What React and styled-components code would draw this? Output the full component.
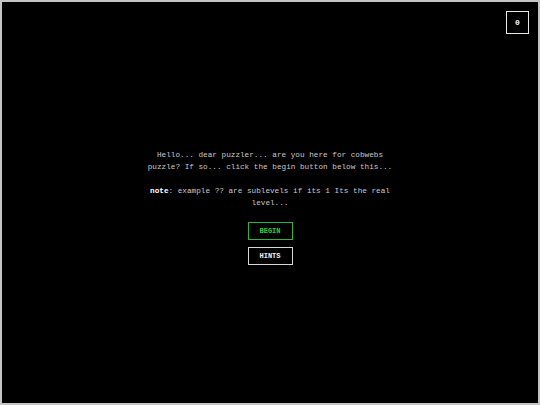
import React from "react";
import styled, { createGlobalStyle } from "styled-components";

const Global = createGlobalStyle`
  html, body { margin: 0; padding: 0; background: #c4c4c4; }
  body { font-family: "Liberation Mono", "Courier New", monospace; }
`;

const Frame = styled.div`
  position: relative;
  margin: 2px;
  height: calc(100vh - 4px);
  background: #000;
  display: flex;
  flex-direction: column;
  align-items: center;
  justify-content: center;
`;

const Counter = styled.div`
  position: absolute;
  top: 9px;
  right: 9px;
  width: 21px;
  height: 21px;
  border: 1.5px solid #e8e8e8;
  color: #fff;
  font-size: 8px;
  font-weight: bold;
  display: flex;
  align-items: center;
  justify-content: center;
`;

const Content = styled.div`
  width: 252px;
  display: flex;
  flex-direction: column;
  align-items: center;
  margin-top: 15px;
`;

const Para = styled.p`
  margin: 0 0 ${(p) => p.$gap}px;
  color: #c8c8c8;
  font-size: 7.7px;
  line-height: 12px;
  text-align: center;
`;

const Strong = styled.b`
  color: #fff;
`;

const Button = styled.button`
  width: 45px;
  height: 18px;
  padding: 0;
  background: #000;
  border: 1px solid ${(p) => p.$border};
  color: ${(p) => p.$color};
  font-family: "Liberation Mono", "Courier New", monospace;
  font-weight: bold;
  font-size: 7px;
  margin-bottom: 7px;
  cursor: pointer;
`;

export default function App() {
  return (
    <>
      <Global />
      <Frame>
        <Counter>0</Counter>
        <Content>
          <Para $gap={12}>
            Hello... dear puzzler... are you here for cobwebs puzzle? If so... click the begin button below this...
          </Para>
          <Para $gap={13}>
            <Strong>note</Strong>: example ?? are sublevels if its 1 Its the real level...
          </Para>
          <Button $border="#2fb52f" $color="#2fd02f">BEGIN</Button>
          <Button $border="#d8d8d8" $color="#f0f0f0">HINTS</Button>
        </Content>
      </Frame>
    </>
  );
}
